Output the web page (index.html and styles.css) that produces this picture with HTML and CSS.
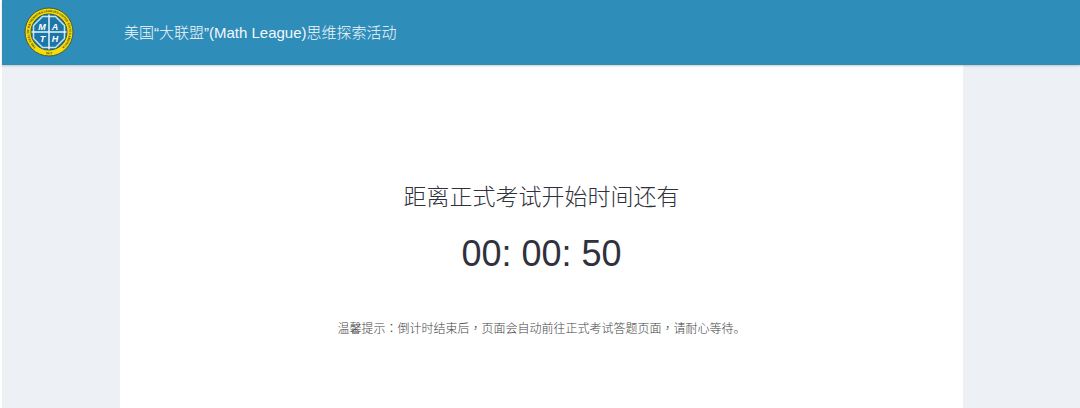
FILE: index.html
```html
<!DOCTYPE html>
<html lang="zh-CN">
<head>
    <meta charset="UTF-8">
    <meta name="viewport" content="width=device-width, initial-scale=1.0">
    <title>美国“大联盟”(Math League)思维探索活动</title>
    <link rel="stylesheet" href="styles.css">
</head>
<body>
    <header class="header">
        <svg class="logo" viewBox="0 0 100 100" role="img" aria-label="Math League">
            <defs>
                <path id="ringTop" d="M30 84.6 A40 40 0 1 1 70 84.6"/>
                <path id="ringBottom" d="M28 89 A45 45 0 0 0 72 89"/>
            </defs>
            <circle cx="50" cy="50" r="48" fill="#f5dc0a" stroke="#4c5a32" stroke-width="2"/>
            <circle cx="50" cy="50" r="36" fill="#1a77a8" stroke="#3c5538" stroke-width="2"/>
            <text class="ring-text" text-anchor="middle"><textPath href="#ringTop" startOffset="50%">THE SEAL OF MATHEMATICS LEAGUES UNITED STATES AMERICA</textPath></text>
            <text class="ring-text" text-anchor="middle"><textPath href="#ringBottom" startOffset="50%">1977</textPath></text>
            <path d="M37 19 H63 L81 37 V63 L63 81 H37 L19 63 V37 Z" fill="none" stroke="#c5e2ee" stroke-width="3"/>
            <path d="M50 15 V85 M15 50 H85" stroke="#e8f5fa" stroke-width="3"/>
            <text class="seal-letter" x="36" y="45">M</text>
            <text class="seal-letter" x="62" y="45">A</text>
            <text class="seal-letter" x="37" y="69">T</text>
            <text class="seal-letter" x="62" y="69">H</text>
        </svg>
        <span class="title">美国“大联盟”(Math League)思维探索活动</span>
    </header>
    <div class="page">
        <main class="panel">
            <h1 class="heading">距离正式考试开始时间还有</h1>
            <div class="timer">00: 00: 50</div>
            <p class="tip">温馨提示<span class="mark" lang="zh-TW">：</span>倒计时结束后<span class="mark" lang="zh-TW">，</span>页面会自动前往正式考试答题页面<span class="mark" lang="zh-TW">，</span>请耐心等待。</p>
        </main>
    </div>
</body>
</html>
```
FILE: styles.css
```css
* {
    margin: 0;
    padding: 0;
    box-sizing: border-box;
}

body {
    display: flex;
    flex-direction: column;
    min-height: 100vh;
    padding-left: 2px;
    background: #fff;
    color: #2f323c;
    font-family: "Liberation Sans", "Noto Sans CJK SC", sans-serif;
}

.header {
    position: relative;
    display: flex;
    align-items: center;
    gap: 50px;
    height: 65px;
    padding: 0 22px 2px;
    background: #2f8dba;
    box-shadow: 0 1px 2px rgba(0, 0, 0, 0.2);
}

.logo {
    width: 50px;
    height: 50px;
}

.ring-text {
    font-family: "Liberation Sans Narrow", "Liberation Sans", sans-serif;
    font-size: 6px;
    font-weight: bold;
    fill: #3a3c10;
}

.seal-letter {
    font-size: 18px;
    font-weight: bold;
    font-style: italic;
    text-anchor: middle;
    fill: #fff;
}

.title {
    color: #f2f8fb;
    font-size: 15px;
    font-weight: 300;
}

.page {
    display: flex;
    flex: 1;
    padding: 0 117px 0 118px;
    background: #edf1f6;
}

.panel {
    flex: 1;
    padding-top: 114px;
    background: #fff;
    text-align: center;
}

.heading {
    font-size: 23px;
    font-weight: 300;
    line-height: 36px;
}

.timer {
    margin-top: 17px;
    font-size: 36px;
    line-height: 44px;
}

.tip {
    margin-top: 43px;
    color: #444;
    font-size: 12px;
    font-weight: 300;
    line-height: 18px;
}

/* centred punctuation */
.mark {
    font-family: "Noto Sans CJK TC", sans-serif;
}
```
